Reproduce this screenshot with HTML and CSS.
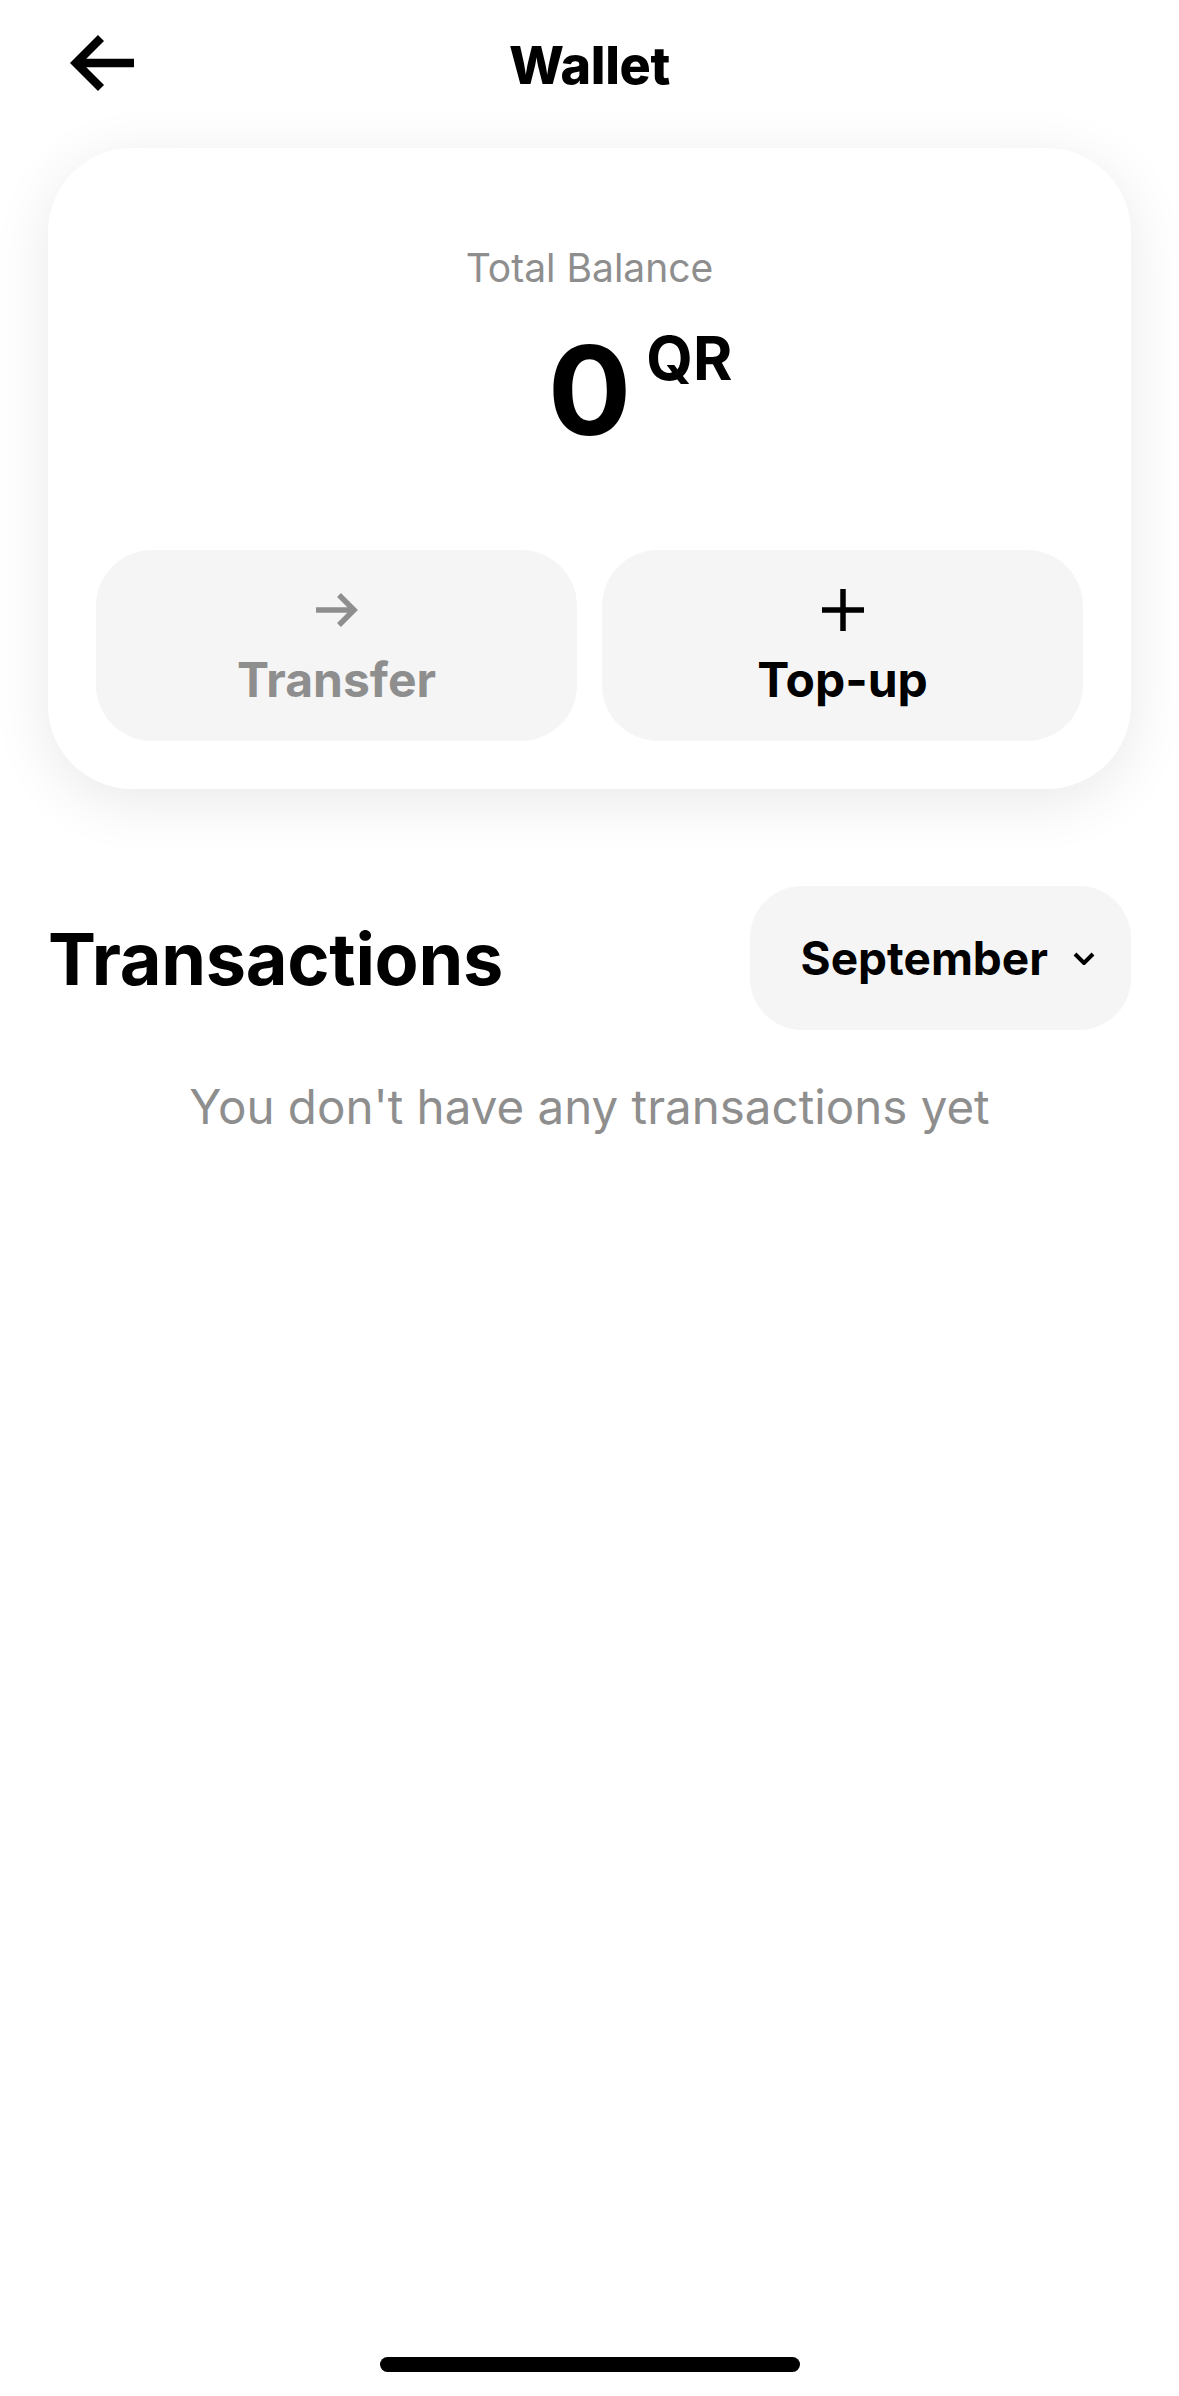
FILE: index.html
```html
<!DOCTYPE html>
<html lang="en">
<head>
    <meta charset="UTF-8">
    <meta name="viewport" content="width=device-width, initial-scale=1.0">
    <title>Wallet</title>
    <link rel="stylesheet" href="styles.css">
</head>
<body>
    <div class="screen">
        <div class="header">
            <div class="back">
                <svg width="66" height="58" viewBox="0 0 66 58">
                    <path d="M65 29H8M32 4L7 29L32 54" fill="none" stroke="#000" stroke-width="8.5"/>
                </svg>
            </div>
            <h1>Wallet</h1>
            <div></div>
        </div>

        <div class="card">
            <p class="label">Total Balance</p>
            <div class="amount">
                <span class="value">0<span class="currency">QR</span></span>
            </div>
            <div class="actions">
                <div class="action disabled">
                    <svg width="44" height="44" viewBox="0 0 44 44">
                        <path d="M1 22H39M24 7L39 22L24 37" fill="none" stroke="#8e8e8e" stroke-width="5.5"/>
                    </svg>
                    <span>Transfer</span>
                </div>
                <div class="action">
                    <svg width="44" height="44" viewBox="0 0 44 44">
                        <path d="M22 1V43M1 22H43" fill="none" stroke="#000" stroke-width="5.5"/>
                    </svg>
                    <span>Top-up</span>
                </div>
            </div>
        </div>

        <div class="tx-head">
            <h2>Transactions</h2>
            <div class="month">
                <span>September</span>
                <svg width="22" height="13" viewBox="0 0 22 13">
                    <path d="M2 2L11 11L20 2" fill="none" stroke="#000" stroke-width="4"/>
                </svg>
            </div>
        </div>
        <p class="empty">You don't have any transactions yet</p>

        <div class="home-bar"></div>
    </div>
</body>
</html>
```

FILE: styles.css
```css
*{
    margin: 0;
    padding: 0;
    box-sizing: border-box;
}
body{
    font-family: Inter, "Noto Sans", sans-serif;
    background-color: #fff;
    color: #000;
}
.screen{
    position: relative;
    width: 1179px;
    height: 2396px;
    overflow: hidden;
}
.header{
    height: 130px;
    display: grid;
    grid-template-columns: 1fr auto 1fr;
    align-items: center;
}
.header .back{
    padding-left: 69px;
    display: flex;
    align-items: center;
    margin-top: -4px;
}
.header h1{
    font-size: 52px;
    font-weight: 800;
    letter-spacing: -0.3px;
}
.card{
    margin: 18px 48px 0;
    padding: 96px 48px 48px;
    background-color: #fff;
    border-radius: 84px;
    box-shadow: 0 12px 60px rgba(0,0,0,0.09);
}
.label{
    text-align: center;
    font-size: 39px;
    line-height: 48px;
    color: #8e8e8e;
}
.amount{
    margin-top: 36px;
    display: flex;
    justify-content: center;
}
.value{
    position: relative;
    font-size: 124px;
    line-height: 124px;
    font-weight: 700;
}
.currency{
    position: absolute;
    left: calc(100% + 15px);
    top: 0;
    font-size: 60px;
    line-height: 60px;
    font-weight: 700;
}
.actions{
    margin-top: 98px;
    display: flex;
    gap: 25px;
}
.action{
    flex: 1;
    height: 191px;
    padding-top: 38px;
    background-color: #f5f5f5;
    border-radius: 56px;
    display: flex;
    flex-direction: column;
    align-items: center;
    gap: 20px;
}
.action span{
    font-size: 48px;
    line-height: 56px;
    font-weight: 700;
}
.action.disabled span{
    color: #8e8e8e;
}
.tx-head{
    margin-top: 97px;
    padding: 0 48px;
    display: flex;
    justify-content: space-between;
    align-items: center;
}
.tx-head h2{
    font-size: 72px;
    font-weight: 700;
    letter-spacing: -0.3px;
}
.month{
    height: 144px;
    padding: 0 36px 0 51px;
    background-color: #f5f5f5;
    border-radius: 52px;
    display: flex;
    align-items: center;
    gap: 25px;
}
.month span{
    font-size: 46px;
    font-weight: 700;
}
.empty{
    margin-top: 48px;
    text-align: center;
    font-size: 47.5px;
    color: #8e8e8e;
}
.home-bar{
    position: absolute;
    left: 380px;
    bottom: 24px;
    width: 420px;
    height: 15px;
    border-radius: 8px;
    background-color: #000;
}
```
